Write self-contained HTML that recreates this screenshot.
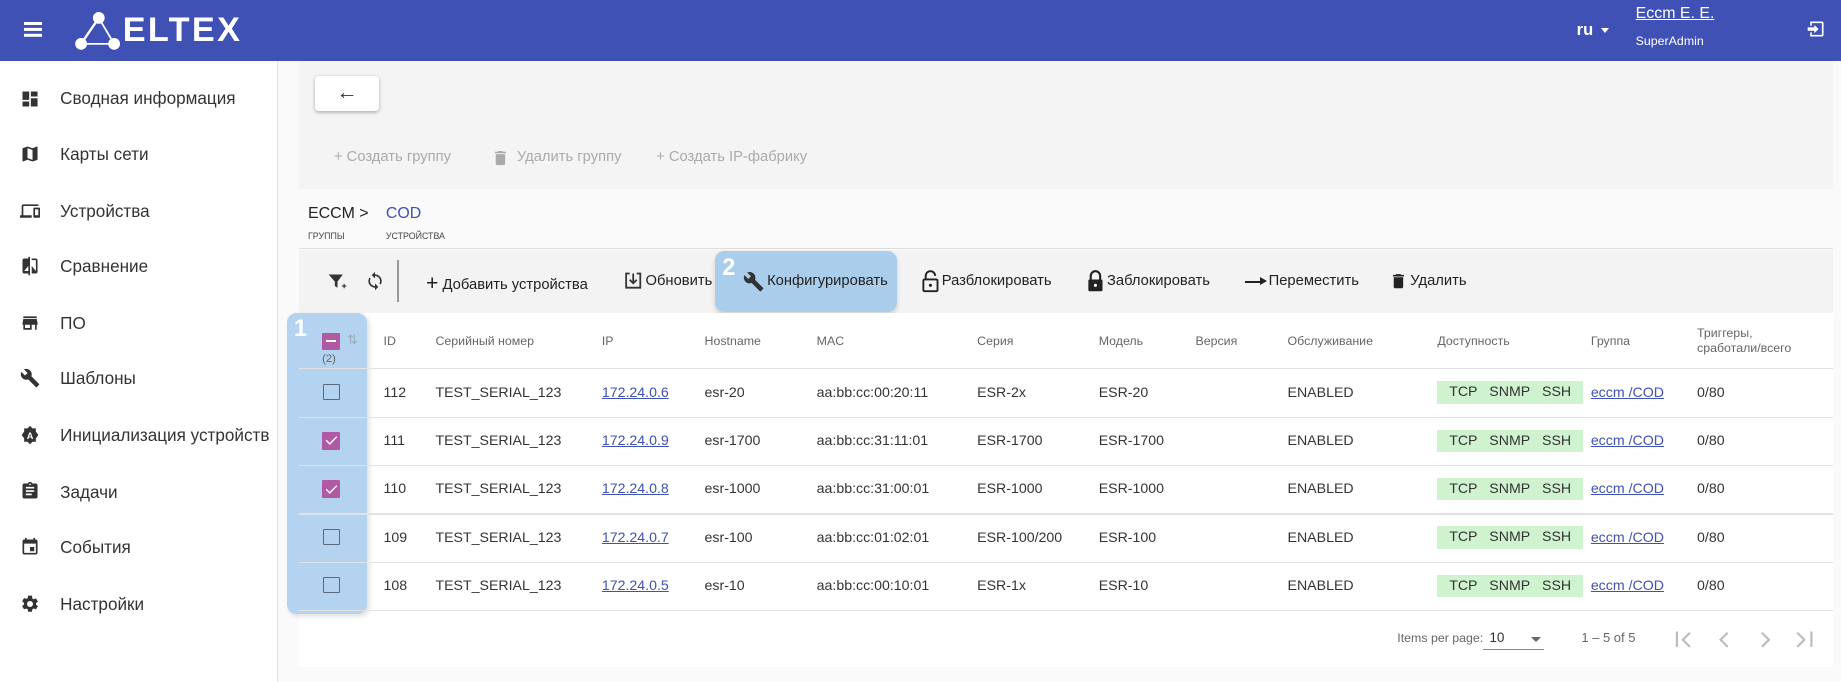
<!DOCTYPE html>
<html><head><meta charset="utf-8"><style>
html,body{margin:0;padding:0;overflow:hidden;background:#fafafa}
#w{position:relative;width:1560px;height:578px;zoom:1.18013;font-family:"Liberation Sans",sans-serif;color:#333;background:#fafafa;overflow:hidden}
.a{position:absolute;white-space:nowrap}
.hdr{left:0;top:0;width:1560px;height:52px;background:#3f51b5}
.side{left:0;top:52px;width:235px;height:526px;background:#fff;border-right:1px solid #e0e0e0}
.nav{left:51px;font-size:14.5px;color:#333}
.ni{left:17px;width:17px;height:17px}
.t{font-size:12px;color:#333}
.h{font-size:10.5px;color:#666}
.row{left:253px;width:1300px;height:1px;background:#e2e2e2}
.cb{width:12px;height:12px;border:1.5px solid #5a6a7a;border-radius:1px;left:274px}
.cbc{width:15px;height:15px;background:#b05aa6;left:273px;border-radius:1px}
.lnk{color:#3f51b5;text-decoration:underline}
.chip{left:1218px;width:123px;height:19px;background:#cff3cf;font-size:12px;color:#333;line-height:19px}
.tb{font-size:12.5px;color:#222;top:231px}
.dis{font-size:12.5px;color:#aaa;top:126px}
</style></head><body><div id="w">
<div class="a hdr"></div>
<div class="a" style="left:20px;top:19px;width:16px;height:2px;background:#fff;box-shadow:0 5px 0 #fff,0 10px 0 #fff"></div>
<svg class="a" style="left:63px;top:10px" width="40" height="32" viewBox="0 0 40 32"><g fill="#fff" stroke="#fff"><circle cx="21" cy="5" r="4.5"/><circle cx="6" cy="27" r="4.5"/><circle cx="34" cy="27" r="4.5"/><line x1="21" y1="5" x2="6" y2="27" stroke-width="2"/><line x1="21" y1="5" x2="34" y2="27" stroke-width="1.5"/><line x1="6" y1="27" x2="34" y2="27" stroke-width="1.5"/></g></svg>
<div class="a" style="left:104px;top:9px;font-size:29px;color:#fff;letter-spacing:2px;font-weight:bold">ELTEX</div>
<div class="a" style="left:1336px;top:17px;font-size:14px;color:#fff;font-weight:bold">ru</div>
<div class="a" style="left:1357px;top:24px;border-left:4px solid transparent;border-right:4px solid transparent;border-top:5px solid #fff"></div>
<div class="a" style="left:1386px;top:4px;font-size:13.5px;color:#fff;text-decoration:underline">Eccm E. E.</div>
<div class="a" style="left:1386px;top:29px;font-size:10.5px;color:#fff">SuperAdmin</div>
<svg class="a" style="left:1530px;top:16px" width="17" height="17" viewBox="0 0 24 24"><path d="M10 17l5-5-5-5v3H2v4h8v3zM19 3H5v5h2V5h12v14H7v-3H5v5h14a2 2 0 0 0 2-2V5a2 2 0 0 0-2-2z" fill="#fff"/></svg>

<div class="a side"></div>
<div class="a nav" style="top:75px">Сводная информация</div>
<div class="a nav" style="top:123px">Карты сети</div>
<div class="a nav" style="top:171px">Устройства</div>
<div class="a nav" style="top:218px">Сравнение</div>
<div class="a nav" style="top:266px">ПО</div>
<div class="a nav" style="top:313px">Шаблоны</div>
<div class="a nav" style="top:361px">Инициализация устройств</div>
<div class="a nav" style="top:409px">Задачи</div>
<div class="a nav" style="top:456px">События</div>
<div class="a nav" style="top:504px">Настройки</div>
<svg class="a ni" style="top:75px" viewBox="0 0 24 24"><path d="M3 13h8V3H3zm0 8h8v-6H3zm10 0h8V11h-8zm0-18v6h8V3z" fill="#333"/></svg>
<svg class="a ni" style="top:122px" viewBox="0 0 24 24"><path d="M20.5 3l-.16.03L15 5.1 9 3 3.36 4.9c-.21.07-.36.25-.36.48V20.5c0 .28.22.5.5.5l.16-.03L9 18.9l6 2.1 5.64-1.9c.21-.07.36-.25.36-.48V3.5c0-.28-.22-.5-.5-.5zM15 19l-6-2.11V5l6 2.11z" fill="#333"/></svg>
<svg class="a ni" style="top:170px" viewBox="0 0 24 24"><path d="M4 6h18V4H4c-1.1 0-2 .9-2 2v11H0v3h14v-3H4zm19 2h-6c-.55 0-1 .45-1 1v10c0 .55.45 1 1 1h6c.55 0 1-.45 1-1V9c0-.55-.45-1-1-1zm-1 9h-4v-7h4z" fill="#333"/></svg>
<svg class="a ni" style="top:217px" viewBox="0 0 24 24"><path d="M10 3H5c-1.1 0-2 .9-2 2v14c0 1.1.9 2 2 2h5v2h2V1h-2zm0 15H5l5-6zm9-15h-5v2h5v13l-5-6v9h5c1.1 0 2-.9 2-2V5c0-1.1-.9-2-2-2z" fill="#333"/></svg>
<svg class="a ni" style="top:265px" viewBox="0 0 24 24"><path d="M20 4H4v2h16zm1 10v-2l-1-5H4l-1 5v2h1v6h10v-6h4v6h2v-6zm-9 4H6v-4h6z" fill="#333"/></svg>
<svg class="a ni" style="top:312px" viewBox="0 0 24 24"><path d="M22.7 19l-9.1-9.1c.9-2.3.4-5-1.5-6.9-2-2-5-2.4-7.4-1.3L9 6 6 9 1.6 4.7C.4 7.1.9 10.1 2.9 12.1c1.9 1.9 4.6 2.4 6.9 1.5l9.1 9.1c.4.4 1 .4 1.4 0l2.3-2.3c.5-.4.5-1.1.1-1.4z" fill="#333"/></svg>
<svg class="a ni" style="top:360px" viewBox="0 0 24 24"><path d="M12 1l3 3h4v4l3 4-3 4v4h-4l-3 3-3-3H5v-4l-3-4 3-4V4h4z" fill="#333"/><text x="12" y="16.5" font-size="11" font-weight="bold" fill="#fff" text-anchor="middle" font-family="Liberation Sans">A</text></svg>
<svg class="a ni" style="top:408px" viewBox="0 0 24 24"><path d="M19 3h-4.2C14.4 1.8 13.3 1 12 1s-2.4.8-2.8 2H5c-1.1 0-2 .9-2 2v14c0 1.1.9 2 2 2h14c1.1 0 2-.9 2-2V5c0-1.1-.9-2-2-2zm-7 0c.55 0 1 .45 1 1s-.45 1-1 1-1-.45-1-1 .45-1 1-1zm2 14H7v-2h7zm3-4H7v-2h10zm0-4H7V7h10z" fill="#333"/></svg>
<svg class="a ni" style="top:455px" viewBox="0 0 24 24"><path d="M17 12h-5v5h5zM16 1v2H8V1H6v2H5c-1.11 0-2 .9-2 2v14c0 1.1.89 2 2 2h14c1.1 0 2-.9 2-2V5c0-1.1-.9-2-2-2h-1V1zm3 18H5V8h14z" fill="#333"/></svg>
<svg class="a ni" style="top:503px" viewBox="0 0 24 24"><path d="M19.14 12.94c.04-.3.06-.61.06-.94s-.02-.64-.07-.94l2.03-1.58a.49.49 0 0 0 .12-.61l-1.920-3.32a.49.49 0 0 0-.59-.22l-2.39.96c-.5-.38-1.030-.7-1.62-.94l-.36-2.54A.48.48 0 0 0 13.92 2h-3.84c-.24 0-.43.17-.47.41l-.36 2.54c-.59.24-1.13.57-1.62.94l-2.39-.96a.48.48 0 0 0-.59.22L2.74 8.47c-.12.21-.08.47.12.61l2.03 1.58c-.05.3-.09.63-.09.94s.02.64.07.94l-2.03 1.58a.49.49 0 0 0-.12.61l1.92 3.32c.12.22.37.29.59.22l2.39-.96c.5.38 1.03.7 1.62.94l.36 2.54c.05.24.24.41.48.41h3.84c.24 0 .44-.17.47-.41l.36-2.54c.59-.24 1.13-.56 1.62-.94l2.39.96c.22.08.47 0 .59-.22l1.92-3.32c.12-.22.07-.47-.12-.61zM12 15.6A3.6 3.6 0 1 1 12 8.4a3.6 3.6 0 0 1 0 7.2z" fill="#333"/></svg>

<div class="a" style="left:253px;top:52px;width:1300px;height:108px;background:#f4f4f4"></div>
<div class="a" style="left:267px;top:64px;width:54px;height:30px;background:#fff;border-radius:3px;box-shadow:0 1px 3px rgba(0,0,0,.3)"></div>
<div class="a" style="left:285px;top:68px;font-size:18px;color:#333">←</div>
<div class="a dis" style="left:283px">+ Создать группу</div>
<svg class="a" style="left:416px;top:125px" width="16" height="17" viewBox="0 0 24 24"><path d="M6 19c0 1.1.9 2 2 2h8c1.1 0 2-.9 2-2V7H6zM19 4h-3.5l-1-1h-5l-1 1H5v2h14z" fill="#aaa"/></svg>
<div class="a dis" style="left:438px">Удалить группу</div>
<div class="a dis" style="left:556px">+ Создать IP-фабрику</div>

<div class="a" style="left:261px;top:174px;font-size:13.5px;color:#222">ECCM &gt;</div>
<div class="a" style="left:327px;top:174px;font-size:13.5px;color:#3f51b5">COD</div>
<div class="a" style="left:261px;top:196px;font-size:7.5px;color:#444">ГРУППЫ</div>
<div class="a" style="left:327px;top:196px;font-size:7.5px;color:#444">УСТРОЙСТВА</div>
<div class="a" style="left:253px;top:210px;width:1300px;height:1px;background:#ddd"></div>

<div class="a" style="left:253px;top:212px;width:1300px;height:53px;background:#f3f3f3"></div>
<div class="a" style="left:606px;top:213px;width:154px;height:51px;background:#abcdec;border-radius:8px;box-shadow:0 2px 4px rgba(0,0,0,.15)"></div>
<div class="a" style="left:612px;top:216px;font-size:20px;font-weight:bold;color:#fff">2</div>
<svg class="a" style="left:276px;top:230px" width="18" height="18" viewBox="0 0 24 24"><path d="M3 4h16l-6 8v7l-3-2v-5z" fill="#333"/><path d="M18 17h5M20.5 14.5v5" stroke="#333" stroke-width="1.3"/></svg>
<svg class="a" style="left:309px;top:230px" width="17" height="17" viewBox="0 0 24 24"><path d="M12 4V1L8 5l4 4V6c3.31 0 6 2.69 6 6 0 1.01-.25 1.97-.7 2.8l1.46 1.46A7.930 7.930 0 0 0 20 12c0-4.42-3.58-8-8-8zm0 14c-3.31 0-6-2.69-6-6 0-1.01.25-1.97.7-2.8L5.24 7.74A7.93 7.93 0 0 0 4 12c0 4.42 3.58 8 8 8v3l4-4-4-4z" fill="#333"/></svg>
<div class="a" style="left:336px;top:220px;width:2px;height:36px;background:#999"></div>
<div class="a tb" style="left:361px;top:229px"><span style="font-size:18px;position:relative;top:1px">+</span> Добавить устройства</div>
<svg class="a" style="left:527px;top:229px" width="19" height="18" viewBox="0 0 24 24"><path d="M3 3h5v2H5v14h14V5h-3V3h5v18H3z" fill="#333"/><path d="M12 4v11M8 11l4 4 4-4" stroke="#333" stroke-width="2" fill="none"/></svg>
<div class="a tb" style="left:547px">Обновить</div>
<svg class="a" style="left:630px;top:230px" width="18" height="18" viewBox="0 0 24 24"><path d="M22.7 19l-9.1-9.1c.9-2.3.4-5-1.5-6.9-2-2-5-2.4-7.4-1.3L9 6 6 9 1.6 4.7C.4 7.1.9 10.1 2.9 12.1c1.9 1.9 4.6 2.4 6.9 1.5l9.1 9.1c.4.4 1 .4 1.4 0l2.3-2.3c.5-.4.5-1.1.1-1.4z" fill="#333"/></svg>
<div class="a tb" style="left:650px">Конфигурировать</div>
<svg class="a" style="left:780px;top:229px" width="16" height="19" viewBox="0 0 16 19"><path d="M4 8V5a4 4 0 0 1 8 0" stroke="#222" stroke-width="1.6" fill="none"/><rect x="2" y="8" width="12" height="10" rx="1" stroke="#222" stroke-width="1.6" fill="none"/><circle cx="8" cy="13" r="1.3" fill="#222"/></svg>
<div class="a tb" style="left:798px">Разблокировать</div>
<svg class="a" style="left:920px;top:229px" width="16" height="19" viewBox="0 0 16 19"><path d="M4 8V5a4 4 0 0 1 8 0v3" stroke="#222" stroke-width="1.8" fill="none"/><rect x="2" y="8" width="12" height="10" rx="1" fill="#222"/><circle cx="8" cy="13" r="1.3" fill="#fff"/></svg>
<div class="a tb" style="left:938px">Заблокировать</div>
<div class="a" style="left:1055px;top:238px;width:14px;height:2px;background:#222"></div>
<div class="a" style="left:1068px;top:235px;border-top:4px solid transparent;border-bottom:4px solid transparent;border-left:6px solid #222"></div>
<div class="a tb" style="left:1075px">Переместить</div>
<svg class="a" style="left:1177px;top:229px" width="16" height="19" viewBox="0 0 24 24"><path d="M6 19c0 1.1.9 2 2 2h8c1.1 0 2-.9 2-2V7H6zM19 4h-3.5l-1-1h-5l-1 1H5v2h14z" fill="#222"/></svg>
<div class="a tb" style="left:1195px">Удалить</div>

<div class="a" style="left:253px;top:265px;width:1300px;height:300px;background:#fff"></div>
<div class="a" style="left:243px;top:265px;width:68px;height:255px;background:#b3d3f0;border-radius:8px;box-shadow:2px 2px 4px rgba(0,0,0,.12)"></div>
<div class="a" style="left:249px;top:268px;font-size:20px;font-weight:bold;color:#fff">1</div>
<div class="a" style="left:273px;top:282px;width:15px;height:15px;background:#b05aa6;border-radius:1px"></div>
<div class="a" style="left:276px;top:288px;width:9px;height:2px;background:#fff"></div>
<div class="a" style="left:294px;top:281px;font-size:11px;color:#9ab">⇅</div>
<div class="a h" style="left:273px;top:299px;font-size:9.5px">(2)</div>
<div class="a h" style="left:325px;top:283px">ID</div>
<div class="a h" style="left:369px;top:283px">Серийный номер</div>
<div class="a h" style="left:510px;top:283px">IP</div>
<div class="a h" style="left:597px;top:283px">Hostname</div>
<div class="a h" style="left:692px;top:283px">MAC</div>
<div class="a h" style="left:828px;top:283px">Серия</div>
<div class="a h" style="left:931px;top:283px">Модель</div>
<div class="a h" style="left:1013px;top:283px">Версия</div>
<div class="a h" style="left:1091px;top:283px">Обслуживание</div>
<div class="a h" style="left:1218px;top:283px">Доступность</div>
<div class="a h" style="left:1348px;top:283px">Группа</div>
<div class="a h" style="left:1438px;top:276px;line-height:13px">Триггеры,<br>сработали/всего</div>

<div class="a row" style="top:312px"></div>
<div class="a row" style="top:353px"></div>
<div class="a row" style="top:394px"></div>
<div class="a row" style="top:435px"></div>
<div class="a row" style="top:476px"></div>
<div class="a row" style="top:517px"></div>

<div class="a cb" style="top:325px"></div>
<div class="a cbc" style="top:366px"></div><svg class="a" style="left:275px;top:369px" width="11" height="9"><path d="M1 4.5l3 3 6-6" stroke="#fff" stroke-width="1.2" fill="none"/></svg>
<div class="a cbc" style="top:407px"></div><svg class="a" style="left:275px;top:410px" width="11" height="9"><path d="M1 4.5l3 3 6-6" stroke="#fff" stroke-width="1.2" fill="none"/></svg>
<div class="a cb" style="top:448px"></div>
<div class="a cb" style="top:489px"></div>

<div class="a t" style="left:325px;top:326px">112</div><div class="a t" style="left:369px;top:326px">TEST_SERIAL_123</div><div class="a t lnk" style="left:510px;top:326px">172.24.0.6</div><div class="a t" style="left:597px;top:326px">esr-20</div><div class="a t" style="left:692px;top:326px">aa:bb:cc:00:20:11</div><div class="a t" style="left:828px;top:326px">ESR-2x</div><div class="a t" style="left:931px;top:326px">ESR-20</div><div class="a t" style="left:1091px;top:326px">ENABLED</div><div class="a chip" style="top:323px">&nbsp;&nbsp;&nbsp;TCP&nbsp;&nbsp;&nbsp;SNMP&nbsp;&nbsp;&nbsp;SSH</div><div class="a t lnk" style="left:1348px;top:326px">eccm /COD</div><div class="a t" style="left:1438px;top:326px">0/80</div>

<div class="a t" style="left:325px;top:367px">111</div><div class="a t" style="left:369px;top:367px">TEST_SERIAL_123</div><div class="a t lnk" style="left:510px;top:367px">172.24.0.9</div><div class="a t" style="left:597px;top:367px">esr-1700</div><div class="a t" style="left:692px;top:367px">aa:bb:cc:31:11:01</div><div class="a t" style="left:828px;top:367px">ESR-1700</div><div class="a t" style="left:931px;top:367px">ESR-1700</div><div class="a t" style="left:1091px;top:367px">ENABLED</div><div class="a chip" style="top:364px">&nbsp;&nbsp;&nbsp;TCP&nbsp;&nbsp;&nbsp;SNMP&nbsp;&nbsp;&nbsp;SSH</div><div class="a t lnk" style="left:1348px;top:367px">eccm /COD</div><div class="a t" style="left:1438px;top:367px">0/80</div>

<div class="a t" style="left:325px;top:408px">110</div><div class="a t" style="left:369px;top:408px">TEST_SERIAL_123</div><div class="a t lnk" style="left:510px;top:408px">172.24.0.8</div><div class="a t" style="left:597px;top:408px">esr-1000</div><div class="a t" style="left:692px;top:408px">aa:bb:cc:31:00:01</div><div class="a t" style="left:828px;top:408px">ESR-1000</div><div class="a t" style="left:931px;top:408px">ESR-1000</div><div class="a t" style="left:1091px;top:408px">ENABLED</div><div class="a chip" style="top:405px">&nbsp;&nbsp;&nbsp;TCP&nbsp;&nbsp;&nbsp;SNMP&nbsp;&nbsp;&nbsp;SSH</div><div class="a t lnk" style="left:1348px;top:408px">eccm /COD</div><div class="a t" style="left:1438px;top:408px">0/80</div>

<div class="a t" style="left:325px;top:449px">109</div><div class="a t" style="left:369px;top:449px">TEST_SERIAL_123</div><div class="a t lnk" style="left:510px;top:449px">172.24.0.7</div><div class="a t" style="left:597px;top:449px">esr-100</div><div class="a t" style="left:692px;top:449px">aa:bb:cc:01:02:01</div><div class="a t" style="left:828px;top:449px">ESR-100/200</div><div class="a t" style="left:931px;top:449px">ESR-100</div><div class="a t" style="left:1091px;top:449px">ENABLED</div><div class="a chip" style="top:446px">&nbsp;&nbsp;&nbsp;TCP&nbsp;&nbsp;&nbsp;SNMP&nbsp;&nbsp;&nbsp;SSH</div><div class="a t lnk" style="left:1348px;top:449px">eccm /COD</div><div class="a t" style="left:1438px;top:449px">0/80</div>

<div class="a t" style="left:325px;top:490px">108</div><div class="a t" style="left:369px;top:490px">TEST_SERIAL_123</div><div class="a t lnk" style="left:510px;top:490px">172.24.0.5</div><div class="a t" style="left:597px;top:490px">esr-10</div><div class="a t" style="left:692px;top:490px">aa:bb:cc:00:10:01</div><div class="a t" style="left:828px;top:490px">ESR-1x</div><div class="a t" style="left:931px;top:490px">ESR-10</div><div class="a t" style="left:1091px;top:490px">ENABLED</div><div class="a chip" style="top:487px">&nbsp;&nbsp;&nbsp;TCP&nbsp;&nbsp;&nbsp;SNMP&nbsp;&nbsp;&nbsp;SSH</div><div class="a t lnk" style="left:1348px;top:490px">eccm /COD</div><div class="a t" style="left:1438px;top:490px">0/80</div>

<div class="a" style="left:1184px;top:535px;font-size:10.5px;color:#666">Items per page:</div>
<div class="a" style="left:1262px;top:534px;font-size:11.5px;color:#333">10</div>
<div class="a" style="left:1297px;top:540px;border-left:5px solid transparent;border-right:5px solid transparent;border-top:5px solid #666"></div>
<div class="a" style="left:1257px;top:550px;width:51px;height:1px;background:#888"></div>
<div class="a" style="left:1340px;top:534px;font-size:11px;color:#666">1 – 5 of 5</div>
<svg class="a" style="left:1416px;top:532px" width="130" height="20" viewBox="0 0 130 20"><g stroke="#bbb" stroke-width="1.8" fill="none"><path d="M5 3v13M16 4l-6 6 6 6M48 4l-6 6 6 6M77 4l6 6-6 6M107 4l6 6-6 6M119 3v13"/></g></svg>
</div></body></html>
